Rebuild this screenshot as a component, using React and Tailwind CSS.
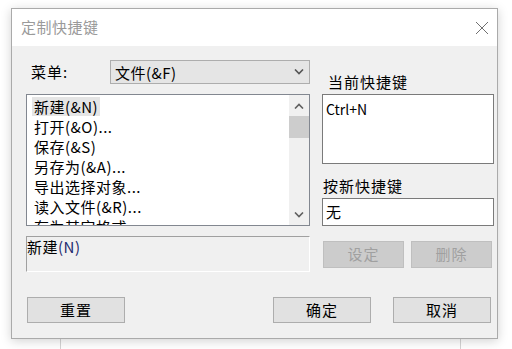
import React from 'react';

const font = { fontFamily: '"Noto Sans CJK SC", "Noto Sans", sans-serif' };

const items = [
  '新建(&N)',
  '打开(&O)...',
  '保存(&S)',
  '另存为(&A)...',
  '导出选择对象...',
  '读入文件(&R)...',
  '存为其它格式...',
];

function Chevron({ up, className }) {
  return (
    <svg width="10" height="6" viewBox="0 0 10 6" className={className}>
      <path
        d={up ? 'M1 5.5 L5 1.5 L9 5.5' : 'M1 0.5 L5 4.5 L9 0.5'}
        fill="none"
        stroke="currentColor"
        strokeWidth="1.6"
      />
    </svg>
  );
}

function Button({ children, className = '', disabled }) {
  return (
    <div
      className={
        'shrink-0 flex items-center justify-center border text-[15px] tracking-[1px] ' +
        (disabled
          ? 'bg-[#cccccc] border-[#bfbfbf] text-[#a0a0a0] '
          : 'bg-[#e1e1e1] border-[#adadad] text-black ') +
        className
      }
    >
      {children}
    </div>
  );
}

export default function App() {
  return (
    <div className="relative w-[512px] h-[349px] bg-white overflow-hidden" style={font}>
      {/* background window lines */}
      <div className="absolute left-[60px] top-[330px] w-px h-[20px] bg-[#d4d4d4]" />
      <div className="absolute left-[460px] top-[330px] w-px h-[20px] bg-[#d4d4d4]" />

      <div className="relative ml-[11px] mt-[8px] w-[487px] h-[331px] border border-[#aaaaaa] bg-[#f0f0f0] shadow-[0_2px_10px_rgba(0,0,0,0.18)] flex flex-col">
        {/* title bar */}
        <div className="h-[37px] bg-white flex items-center pl-[9px] pr-[7px] shrink-0">
          <span className="text-[15px] text-[#9a9a9a] tracking-[0.5px]">定制快捷键</span>
          <svg width="14" height="14" viewBox="0 0 14 14" className="ml-auto mr-[1px] text-[#707070]">
            <path d="M1 1 L13 13 M13 1 L1 13" stroke="currentColor" strokeWidth="1" fill="none" />
          </svg>
        </div>

        {/* body */}
        <div className="flex-1 pl-[14px] pr-[3px] pt-[14px]">
          <div className="flex">
            {/* left column */}
            <div className="w-[284px] shrink-0 flex flex-col">
              <div className="flex items-center h-[24px]">
                <span className="ml-[5px] w-[79px] text-[15px] tracking-[1px] text-black">菜单:</span>
                <div className="w-[200px] h-[24px] border border-[#adadad] bg-[#e5e5e5] flex items-center pl-[4px] pr-[5px]">
                  <span className="text-[15px] tracking-[0.5px] text-black leading-none">文件(&amp;F)</span>
                  <Chevron className="ml-auto text-[#555555]" />
                </div>
              </div>

              <div className="mt-[10px] h-[132px] border border-[#828790] bg-white flex overflow-hidden">
                <div className="flex-1 pl-[5px] pt-[1px] overflow-hidden">
                  {items.map((t, i) => (
                    <div key={t} className="h-[20px] flex items-center">
                      <span
                        className={
                          'px-[2px] h-[19px] leading-[19px] text-[15px] tracking-[0.5px] text-black whitespace-nowrap ' +
                          (i === 0 ? 'bg-[#e5e5e5]' : '')
                        }
                      >
                        {t}
                      </span>
                    </div>
                  ))}
                </div>
                <div className="w-[20px] bg-[#f0f0f0] flex flex-col items-center shrink-0">
                  <div className="h-[21px] flex items-center justify-center text-[#606060]">
                    <Chevron up />
                  </div>
                  <div className="w-full h-[22px] bg-[#cdcdcd]" />
                  <div className="mt-auto h-[21px] flex items-center justify-center text-[#606060]">
                    <Chevron />
                  </div>
                </div>
              </div>

              <div className="mt-[10px] h-[36px] border border-t-[#a0a0a0] border-l-[#a0a0a0] border-r-white border-b-white bg-[#f0f0f0]">
                <div className="text-[15px] leading-[19px] text-black tracking-[0.5px]">
                  新建<span className="text-[#1e2a6e]">(N)</span>
                </div>
              </div>
            </div>

            {/* right column */}
            <div className="ml-[12px] w-[172px] shrink-0 flex flex-col">
              <div className="mt-[12px] ml-[6px] h-[20px] leading-[20px] text-[15px] tracking-[1px] text-black">当前快捷键</div>
              <div className="mt-[2px] h-[70px] border border-[#7a7a7a] bg-white px-[3px] pt-[1px]">
                <span className="text-[14px] leading-[20px] text-black">Ctrl+N</span>
              </div>
              <div className="mt-[12px] ml-[1px] h-[20px] leading-[20px] text-[15px] tracking-[1px] text-black">按新快捷键</div>
              <div className="mt-[2px] h-[28px] border border-[#7a7a7a] bg-white px-[3px] flex items-center">
                <span className="text-[15px] text-black">无</span>
              </div>
              <div className="mt-[15px] ml-[1px] flex gap-[7px]">
                <Button disabled className="w-[81px] h-[27px]">设定</Button>
                <Button disabled className="w-[81px] h-[27px]">删除</Button>
              </div>
            </div>
          </div>

          {/* bottom buttons */}
          <div className="mt-[25px] flex">
            <Button className="ml-[1px] w-[98px] h-[26px]">重置</Button>
            <Button className="ml-[148px] w-[98px] h-[26px]">确定</Button>
            <Button className="ml-[22px] w-[98px] h-[26px]">取消</Button>
          </div>
        </div>
      </div>
    </div>
  );
}
